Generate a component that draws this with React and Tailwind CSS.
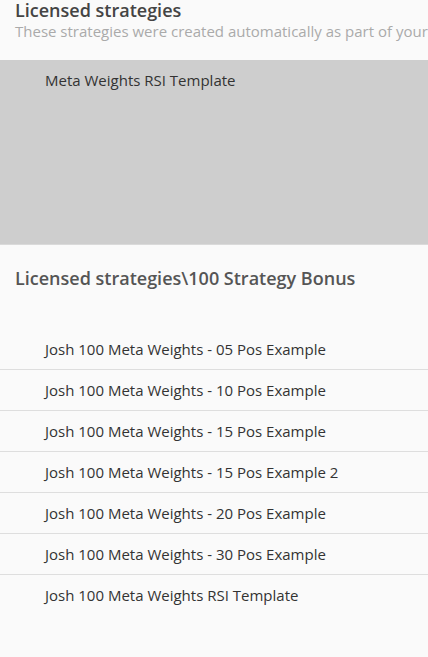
import React from "react";

const rows = [
  "Josh 100 Meta Weights - 05 Pos Example",
  "Josh 100 Meta Weights - 10 Pos Example",
  "Josh 100 Meta Weights - 15 Pos Example",
  "Josh 100 Meta Weights - 15 Pos Example 2",
  "Josh 100 Meta Weights - 20 Pos Example",
  "Josh 100 Meta Weights - 30 Pos Example",
  "Josh 100 Meta Weights RSI Template",
];

export default function App() {
  return (
    <div
      className="w-[428px] h-[657px] overflow-hidden bg-[#fafafa] text-[#333]"
      style={{ fontFamily: '"Open Sans", "Noto Sans", sans-serif' }}
    >
      {/* header */}
      <div className="px-[15px] h-[60px] whitespace-nowrap overflow-hidden">
        <h1 className="text-[18px] leading-[20px] font-semibold text-[#444]">
          Licensed strategies
        </h1>
        <p className="text-[15px] leading-[23px] text-[#aaa]">
          These strategies were created automatically as part of your license
        </p>
      </div>

      {/* selected strategy */}
      <div className="h-[185px] bg-[#cecece] border-b border-[#dadada] pl-[45px] pt-[8px]">
        <span className="text-[15px] leading-[20px] text-[#333]">
          Meta Weights RSI Template
        </span>
      </div>

      {/* folder */}
      <div className="px-[15px] pt-[21px] h-[84px]">
        <h2 className="text-[18px] leading-[24px] font-semibold text-[#555]">
          Licensed strategies\100 Strategy Bonus
        </h2>
      </div>

      <div>
        {rows.map((r, i) => (
          <div
            key={i}
            className={`h-[41px] pl-[45px] flex items-center text-[15px] text-[#333] ${
              i < rows.length - 1 ? "border-b border-[#dedede]" : ""
            }`}
          >
            {r}
          </div>
        ))}
      </div>
    </div>
  );
}
